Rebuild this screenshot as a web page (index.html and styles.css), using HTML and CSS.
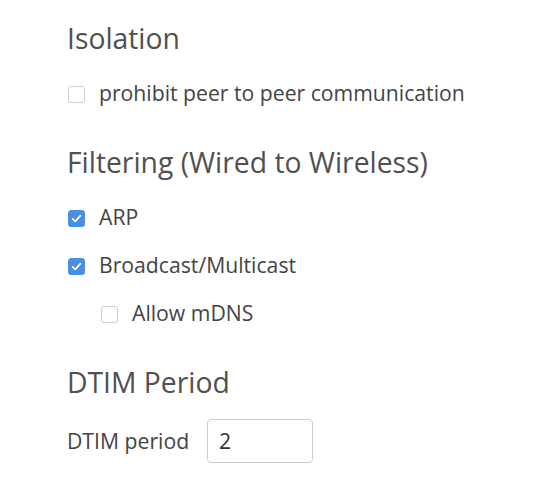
FILE: index.html
```html
<!DOCTYPE html>
<html lang="en">
<head>
<meta charset="utf-8">
<link rel="stylesheet" href="styles.css">
</head>
<body>
<div class="page">
  <section class="group">
    <h2 class="heading">Isolation</h2>
    <div class="rows">
      <label class="row"><span class="box"></span><span class="text">prohibit peer to peer communication</span></label>
    </div>
  </section>
  <section class="group">
    <h2 class="heading">Filtering (Wired to Wireless)</h2>
    <div class="rows">
      <label class="row"><span class="box checked"><svg viewBox="0 0 17 17" width="17" height="17"><path d="M4.6 8.8 L7.3 11.4 L12.4 5.6" fill="none" stroke="#fff" stroke-width="1.8" stroke-linecap="round" stroke-linejoin="round"/></svg></span><span class="text">ARP</span></label>
      <label class="row"><span class="box checked"><svg viewBox="0 0 17 17" width="17" height="17"><path d="M4.6 8.8 L7.3 11.4 L12.4 5.6" fill="none" stroke="#fff" stroke-width="1.8" stroke-linecap="round" stroke-linejoin="round"/></svg></span><span class="text">Broadcast/Multicast</span></label>
      <label class="row sub"><span class="box"></span><span class="text">Allow mDNS</span></label>
    </div>
  </section>
  <section class="group">
    <h2 class="heading">DTIM Period</h2>
    <div class="rows">
      <div class="row field"><span class="text">DTIM period</span><span class="input">2</span></div>
    </div>
  </section>
</div>
</body>
</html>
```

FILE: styles.css
```css
html, body {
  margin: 0;
  padding: 0;
  background: #ffffff;
}
body {
  font-family: "Open Sans", "Liberation Sans", sans-serif;
  color: #474747;
}
.page {
  padding: 20px 0 0 67px;
}
.group {
  margin-bottom: 27px;
}
.heading {
  margin: 0;
  font-size: 28.3px;
  line-height: 36px;
  font-weight: 400;
  color: #505050;
}
.rows {
  margin-top: 13px;
  display: flex;
  flex-direction: column;
}
.row {
  display: flex;
  align-items: center;
  height: 48px;
  font-size: 21.2px;
  line-height: 28px;
}
.row.sub {
  padding-left: 33px;
}
.box {
  width: 17px;
  height: 17px;
  box-sizing: border-box;
  border: 1px solid #cfcfcf;
  border-radius: 3px;
  background: #fff;
  margin-left: 1px;
  margin-right: 14px;
  flex: none;
  position: relative;
  top: 1px;
}
.box.checked {
  background: #4a8ee3;
  border-color: #4a8ee3;
}
.box svg {
  position: absolute;
  left: -1px;
  top: -1px;
}
.text {
  color: #444;
}
.field {
  margin-top: 4px;
}
.input {
  margin-left: 18px;
  width: 106px;
  height: 44px;
  box-sizing: border-box;
  border: 1px solid #cccccc;
  border-radius: 4px;
  padding-left: 11px;
  display: flex;
  align-items: center;
  color: #333;
}
```
